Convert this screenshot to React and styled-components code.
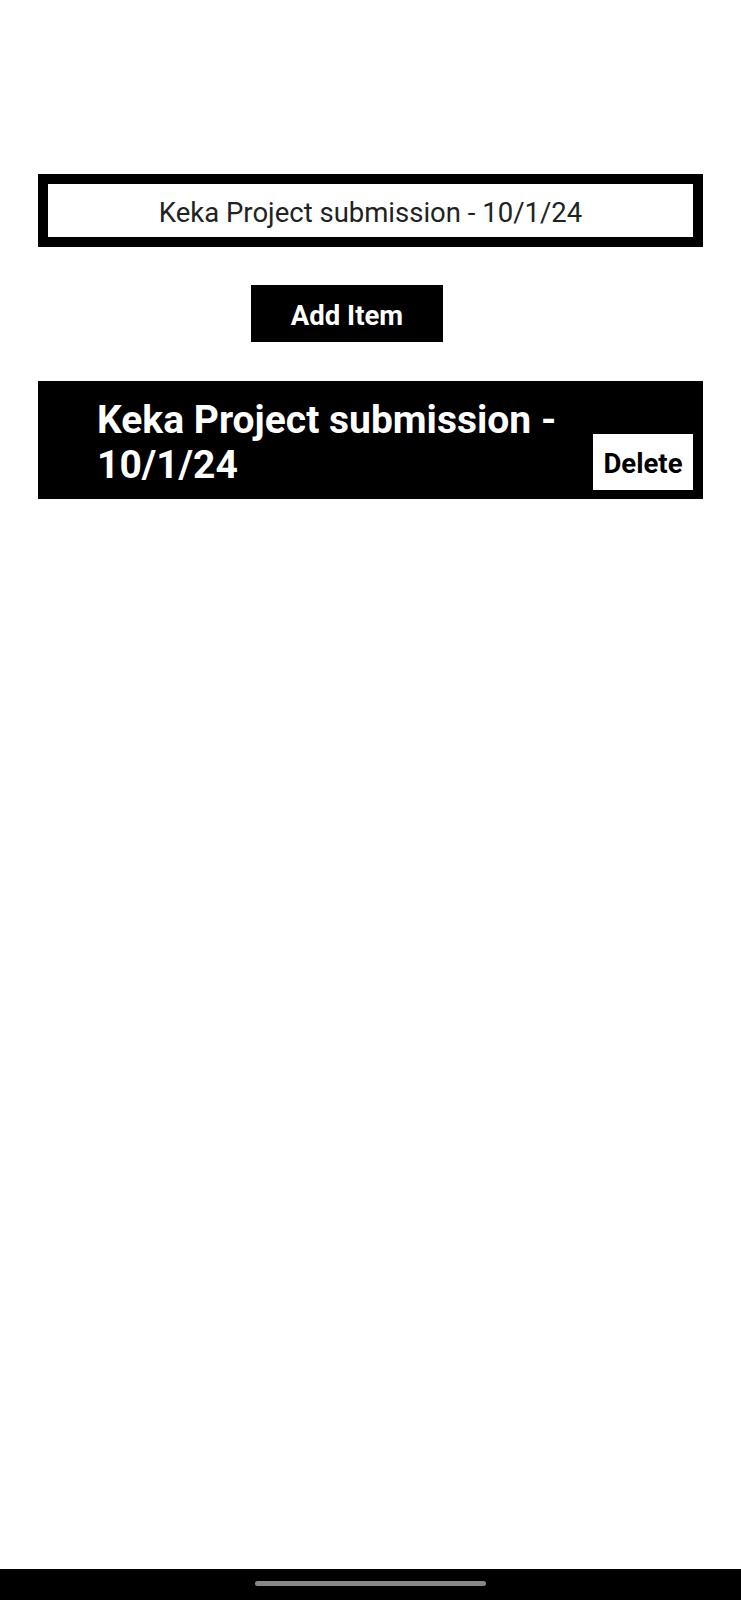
import React from "react";
import styled, { createGlobalStyle } from "styled-components";

const Global = createGlobalStyle`
  html, body { margin: 0; padding: 0; background: #fff; }
  body { font-family: Roboto, "Liberation Sans", sans-serif; }
  * { box-sizing: border-box; }
`;

const Screen = styled.div`
  min-height: 1600px;
  display: flex;
  flex-direction: column;
  background: #fff;
`;

const Content = styled.main`
  flex: 1;
  display: flex;
  flex-direction: column;
  padding: 174px 38px 0 38px;
`;

const TextInput = styled.input`
  display: block;
  width: 100%;
  height: 73px;
  border: 10px solid #000;
  background: #fff;
  padding: 4px 0 0 0;
  margin: 0;
  outline: none;
  text-align: center;
  font-family: Roboto, sans-serif;
  font-size: 27.5px;
  color: #222;
`;

const AddButton = styled.button`
  align-self: flex-start;
  margin: 38px 0 0 213px;
  width: 192px;
  height: 57px;
  border: none;
  background: #000;
  color: #fff;
  font-family: Roboto, sans-serif;
  font-weight: 700;
  font-size: 27.5px;
  padding: 4px 0 0 0;
  cursor: pointer;
`;

const List = styled.ul`
  list-style: none;
  margin: 39px 0 0 0;
  padding: 0;
  display: flex;
  flex-direction: column;
  gap: 10px;
`;

const ItemRow = styled.li`
  display: flex;
  align-items: flex-end;
  background: #000;
  min-height: 118px;
  padding: 16px 10px 11px 59px;
`;

const ItemText = styled.span`
  flex: 1;
  color: #fff;
  font-family: Roboto, sans-serif;
  font-weight: 700;
  font-size: 39px;
  line-height: 45px;
  padding-right: 8px;
`;

const DeleteButton = styled.button`
  flex: none;
  align-self: flex-end;
  margin-bottom: -2px;
  width: 100px;
  height: 56px;
  border: none;
  background: #fff;
  color: #000;
  font-family: Roboto, sans-serif;
  font-weight: 700;
  font-size: 27.5px;
  padding: 2px 0 0 0;
  cursor: pointer;
`;

const NavBar = styled.div`
  height: 31px;
  background: #000;
  display: flex;
  justify-content: center;
  align-items: flex-start;
  padding-top: 12px;
`;

const NavPill = styled.div`
  width: 231px;
  height: 5px;
  border-radius: 3px;
  background: #888;
`;

export default function App() {
  const items = ["Keka Project submission - 10/1/24"];
  return (
    <>
      <Global />
      <Screen>
        <Content>
          <TextInput readOnly value="Keka Project submission - 10/1/24" />
          <AddButton>Add Item</AddButton>
          <List>
            {items.map((t, i) => (
              <ItemRow key={i}>
                <ItemText>{t}</ItemText>
                <DeleteButton>Delete</DeleteButton>
              </ItemRow>
            ))}
          </List>
        </Content>
        <NavBar>
          <NavPill />
        </NavBar>
      </Screen>
    </>
  );
}
